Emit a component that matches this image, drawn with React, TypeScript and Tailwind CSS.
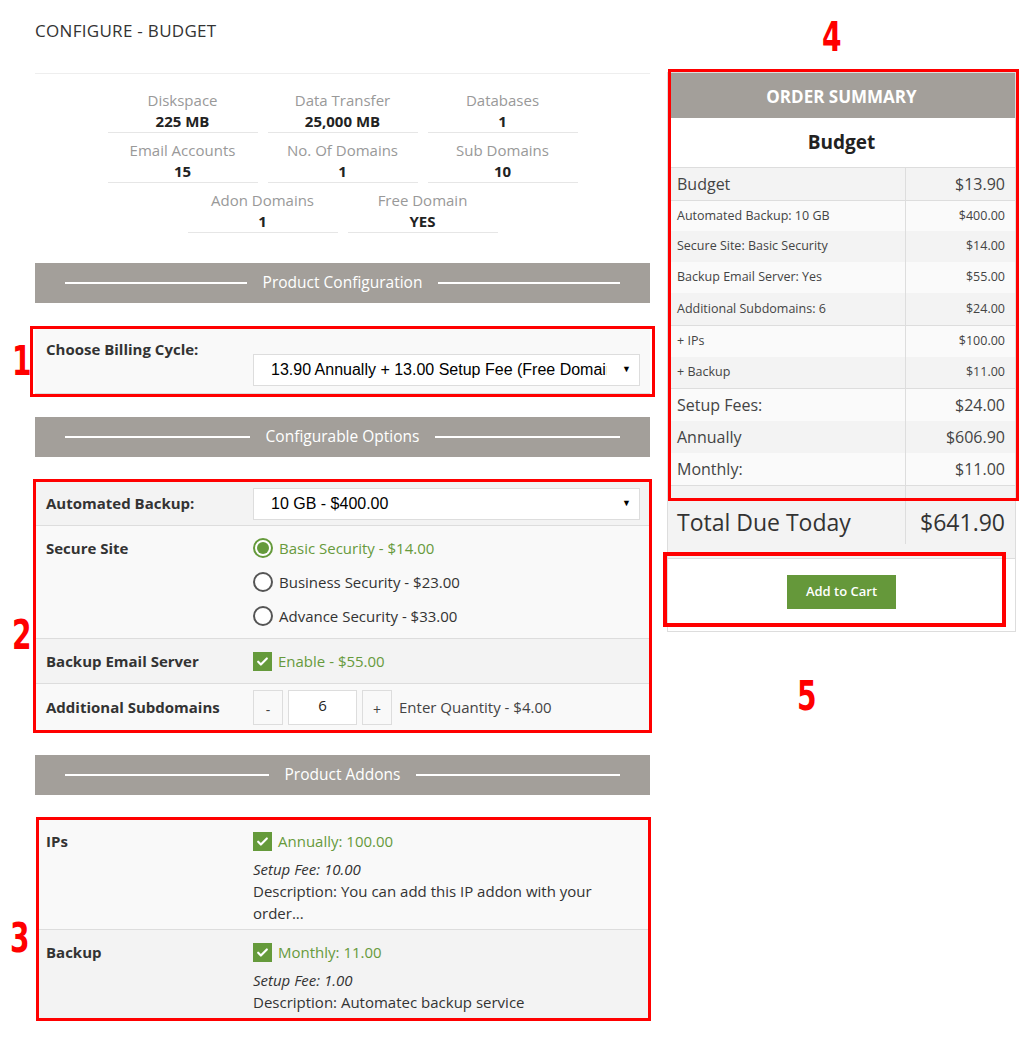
import type { ReactNode } from "react";

const stats = [
  ["Diskspace", "225 MB"],
  ["Data Transfer", "25,000 MB"],
  ["Databases", "1"],
  ["Email Accounts", "15"],
  ["No. Of Domains", "1"],
  ["Sub Domains", "10"],
  ["Adon Domains", "1"],
  ["Free Domain", "YES"],
];

function Bar({ title }: { title: string }) {
  return (
    <div className="flex h-10 items-center gap-4 bg-[#a39f9a] px-[30px]">
      <span className="h-[2px] flex-1 bg-white" />
      <span className="text-[15.5px] text-white">{title}</span>
      <span className="h-[2px] flex-1 bg-white" />
    </div>
  );
}

function Select({ text }: { text: string }) {
  return (
    <div className="flex h-[32px] items-center border border-[#ddd] bg-white pl-[17px] pr-[8px] font-['Liberation_Sans',Arial,sans-serif] text-[16px] text-black">
      <span className="min-w-0 flex-1 overflow-hidden whitespace-nowrap">{text}</span>
      <span className="ml-[15px] text-[9px]">▼</span>
    </div>
  );
}

function Check() {
  return (
    <span className="flex h-[19px] w-[19px] shrink-0 items-center justify-center bg-[#659a3b]">
      <svg width="13" height="13" viewBox="0 0 24 24" fill="none" stroke="white" strokeWidth="4" strokeLinecap="round" strokeLinejoin="round">
        <path d="M4 12.5l5 5L20 6.5" />
      </svg>
    </span>
  );
}

function Radio({ on }: { on?: boolean }) {
  return on ? (
    <span className="flex h-[20px] w-[20px] shrink-0 items-center justify-center rounded-full border-2 border-[#659a3b] bg-white">
      <span className="h-[12px] w-[12px] rounded-full bg-[#659a3b]" />
    </span>
  ) : (
    <span className="h-[20px] w-[20px] shrink-0 rounded-full border-2 border-[#555] bg-white" />
  );
}

function OptRow({ label, children, className }: { label: string; children: ReactNode; className: string }) {
  return (
    <div className={`flex ${className}`}>
      <div className="w-[217px] shrink-0 pl-[10px] text-[15px] font-bold text-[#333]">{label}</div>
      <div className="flex-1 pr-[9px]">{children}</div>
    </div>
  );
}

function SRow({ l, r, className }: { l: string; r: string; className: string }) {
  return (
    <div className={`flex ${className}`}>
      <div className="flex w-[237px] shrink-0 items-center pl-[9px]">{l}</div>
      <div className="flex flex-1 items-center justify-end border-l border-[#ddd] pr-[10px]">{r}</div>
    </div>
  );
}

const num =
  "absolute h-[30px] origin-top-left scale-x-[0.78] font-['Liberation_Sans_Narrow','DejaVu_Sans_Condensed',sans-serif] text-[40px] font-bold leading-[30px] text-[#ff0000]";

export default function App() {
  return (
    <div className="relative h-[1038px] w-[1033px] overflow-hidden bg-white font-['Open_Sans',sans-serif] text-[#333]">
      <div className="flex gap-[17px] pl-[35px]">
        {/* left column */}
        <div className="w-[615px] pt-[21px]">
          <h1 className="text-[17px] leading-5 tracking-[0.3px] text-[#333]">CONFIGURE - BUDGET</h1>
          <div className="mt-[32px] border-t border-[#eee]" />

          <div className="mx-auto mt-[16px] flex w-[470px] flex-wrap justify-center gap-x-[10px] gap-y-[7px]">
            {stats.map(([k, v]) => (
              <div key={k} className="w-[150px] border-b border-[#e6e6e6] text-center text-[15px]">
                <div className="leading-5 text-[#999]">{k}</div>
                <div className="font-bold leading-[22px] text-[#222]">{v}</div>
              </div>
            ))}
          </div>

          <div className="mt-[30px]">
            <Bar title="Product Configuration" />
          </div>

          <div className="-mx-[5px] mt-[23px] border-[3px] border-[#ff0000] px-[2px]">
            <div className="flex border-b border-[#ddd] bg-[#f9f9f9]">
              <div className="w-[218px] shrink-0 pl-[11px] pt-[10px] text-[15px] font-bold leading-5">Choose Billing Cycle:</div>
              <div className="min-w-0 flex-1 pb-[7px] pr-[10px] pt-[25px]">
                <Select text="13.90 Annually + 13.00 Setup Fee (Free Domain)" />
              </div>
            </div>
          </div>

          <div className="mt-[20px]">
            <Bar title="Configurable Options" />
          </div>

          <div className="-mx-[2px] mt-[22px] border-[3px] border-[#ff0000]">
            <OptRow label="Automated Backup:" className="h-[43px] items-center bg-[#f3f3f3]">
              <Select text="10 GB - $400.00" />
            </OptRow>
            <OptRow label="Secure Site" className="border-t border-[#ddd] bg-[#f9f9f9] py-[12px] leading-5">
              <div className="flex flex-col gap-[14px] text-[15px]">
                <div className="flex items-center gap-[6px] text-[#679a3c]">
                  <Radio on />
                  Basic Security - $14.00
                </div>
                <div className="flex items-center gap-[6px] text-[#333]">
                  <Radio />
                  Business Security - $23.00
                </div>
                <div className="flex items-center gap-[6px] text-[#333]">
                  <Radio />
                  Advance Security - $33.00
                </div>
              </div>
            </OptRow>
            <OptRow label="Backup Email Server" className="h-[45px] items-center border-t border-[#ddd] bg-[#f3f3f3]">
              <div className="flex items-center gap-[6px] text-[15px] text-[#679a3c]">
                <Check />
                Enable - $55.00
              </div>
            </OptRow>
            <OptRow label="Additional Subdomains" className="h-[47px] items-center border-t border-[#ddd] bg-[#f9f9f9]">
              <div className="flex items-center text-[15px]">
                <span className="flex h-[35px] w-[30px] items-center justify-center border border-[#ddd] pt-[4px] text-[14px] text-[#444]">-</span>
                <span className="ml-[5px] flex h-[35px] w-[69px] items-center justify-center border border-[#ddd] bg-white pb-[3px] text-[#222]">6</span>
                <span className="ml-[5px] flex h-[35px] w-[30px] items-center justify-center border border-[#ddd] pt-[4px] text-[14px] text-[#444]">+</span>
                <span className="ml-[7px] text-[#444]">Enter Quantity - $4.00</span>
              </div>
            </OptRow>
          </div>

          <div className="mt-[22px]">
            <Bar title="Product Addons" />
          </div>

          <div className="ml-[1px] mr-[-1px] mt-[22px] border-[3px] border-[#ff0000] text-[15px] leading-[22px]">
            <div className="flex bg-[#f9f9f9] pb-[5px] pt-[10px]">
              <div className="w-[214px] shrink-0 pl-[7px] font-bold">IPs</div>
              <div className="flex-1">
                <div className="flex items-center gap-[6px] text-[#679a3c]">
                  <Check />
                  Annually: 100.00
                </div>
                <div className="mt-[6px] italic">Setup Fee: 10.00</div>
                <div className="whitespace-nowrap">Description: You can add this IP addon with your</div>
                <div>order...</div>
              </div>
            </div>
            <div className="flex border-t border-[#ddd] bg-[#f3f3f3] pb-[5px] pt-[11px]">
              <div className="w-[214px] shrink-0 pl-[7px] font-bold">Backup</div>
              <div className="flex-1">
                <div className="flex items-center gap-[6px] text-[#679a3c]">
                  <Check />
                  Monthly: 11.00
                </div>
                <div className="mt-[6px] italic">Setup Fee: 1.00</div>
                <div>Description: Automatec backup service</div>
              </div>
            </div>
          </div>
        </div>

        {/* right column */}
        <div className="w-[349px] pt-[72px]">
          <div className="border border-[#ddd] bg-white text-[#444]">
            <div className="flex h-[45px] items-center justify-center bg-[#a39f9a] pt-[3px] text-[17px] font-bold text-white">ORDER SUMMARY</div>
            <div className="flex h-[49px] items-center justify-center text-[19px] font-bold text-[#222]">Budget</div>
            <SRow l="Budget" r="$13.90" className="h-[33px] border-t border-[#ddd] bg-[#f3f3f3] text-[16px]" />
            <div className="text-[12.5px]">
              <SRow l="Automated Backup: 10 GB" r="$400.00" className="h-[31px] border-t border-[#ddd] bg-[#fafafa]" />
              <SRow l="Secure Site: Basic Security" r="$14.00" className="h-[31px] bg-[#f3f3f3]" />
              <SRow l="Backup Email Server: Yes" r="$55.00" className="h-[31px] bg-[#fafafa]" />
              <SRow l="Additional Subdomains: 6" r="$24.00" className="h-[32px] bg-[#f3f3f3]" />
              <SRow l="+ IPs" r="$100.00" className="h-[32px] border-t border-[#ddd] bg-[#fafafa]" />
              <SRow l="+ Backup" r="$11.00" className="h-[31px] bg-[#f3f3f3]" />
            </div>
            <div className="text-[16px]">
              <SRow l="Setup Fees:" r="$24.00" className="h-[33px] border-t border-[#ddd] bg-[#fafafa]" />
              <SRow l="Annually" r="$606.90" className="h-[32px] bg-[#f3f3f3]" />
              <SRow l="Monthly:" r="$11.00" className="h-[32px] bg-[#fafafa]" />
            </div>
            <SRow l="" r="" className="h-[15px] border-t border-[#ddd] bg-[#f3f3f3]" />
            <SRow l="Total Due Today" r="$641.90" className="h-[58px] bg-[#f3f3f3] pb-[14px] text-[23px] text-[#333]" />
            <div className="flex h-[73px] justify-center border-t border-[#ddd] pt-[16px]">
              <button type="button" className="h-[34px] w-[109px] bg-[#65983a] text-[13px] font-semibold text-white">
                Add to Cart
              </button>
            </div>
          </div>
        </div>
      </div>

      {/* annotations */}
      <div className="pointer-events-none absolute left-[668px] top-[69px] h-[432px] w-[351px] border-[3px] border-[#ff0000]" />
      <div className="pointer-events-none absolute left-[663px] top-[552px] h-[75px] w-[343px] border-4 border-[#ff0000]" />
      <span className={`${num} left-[12px] top-[346px]`}>1</span>
      <span className={`${num} left-[12px] top-[620px]`}>2</span>
      <span className={`${num} left-[10px] top-[923px]`}>3</span>
      <span className={`${num} left-[822px] top-[22px]`}>4</span>
      <span className={`${num} left-[797px] top-[681px]`}>5</span>
    </div>
  );
}
